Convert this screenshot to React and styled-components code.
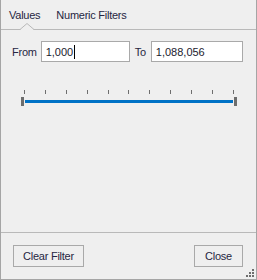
import React from "react";
import styled, { createGlobalStyle } from "styled-components";

const Global = createGlobalStyle`
  html, body { margin: 0; padding: 0; background: #efefef; }
  body { font-family: "Liberation Sans", Arial, sans-serif; }
  * { box-sizing: border-box; }
`;

const Panel = styled.div`
  position: relative;
  width: 257px;
  height: 280px;
  background: #efefef;
  border: 1px solid #a5a5a5;
  border-top: none;
  display: flex;
  flex-direction: column;
  font-size: 11px;
  letter-spacing: -0.25px;
  color: #262642;
`;

const TabBar = styled.div`
  position: relative;
  height: 30px;
  flex: none;
  border-bottom: 1px solid #b9b9b9;
  display: flex;
  align-items: center;
  padding-left: 8px;
  gap: 16px;
`;

const Tab = styled.div`
  color: #262642;
`;

const Notch = styled.svg`
  position: absolute;
  left: 18px;
  bottom: -1px;
  width: 16px;
  height: 8px;
`;

const Body = styled.div`
  flex: 1;
  padding: 11px 12px 0 11px;
`;

const FieldRow = styled.div`
  display: flex;
  align-items: center;
  height: 21px;
`;

const Label = styled.span`
  margin-right: ${(p) => p.$gap}px;
  margin-left: ${(p) => p.$left || 0}px;
`;

const TextBox = styled.div`
  width: ${(p) => p.$w}px;
  height: 21px;
  border: 1px solid #a9a9a9;
  background: #fff;
  color: #1a1a2e;
  padding: 0 0 0 4px;
  display: flex;
  align-items: center;
  letter-spacing: 0;
`;

const Caret = styled.span`
  width: 1px;
  height: 14px;
  background: #000;
  margin-left: 1px;
`;

const Slider = styled.div`
  margin: 28px 0 0 9px;
  width: 216px;
  display: flex;
  flex-direction: column;
  gap: 3px;
`;

const Ticks = styled.div`
  display: flex;
  justify-content: space-between;
  padding: 0 3px;
  height: 4px;
`;

const Tick = styled.div`
  width: 1px;
  height: 4px;
  background: #6e6e6e;
`;

const Track = styled.div`
  display: flex;
  align-items: center;
  gap: 1px;
  height: 9px;
`;

const Thumb = styled.div`
  width: 3px;
  height: 9px;
  background: #6d6d6d;
  flex: none;
`;

const Bar = styled.div`
  flex: 1;
  height: 3px;
  background: #0072c6;
`;

const Footer = styled.div`
  flex: none;
  height: 47px;
  border-top: 1px solid #b9b9b9;
  display: flex;
  justify-content: space-between;
  align-items: flex-start;
  padding: 12px 13px 0 12px;
`;

const Button = styled.button`
  width: ${(p) => p.$w}px;
  height: 22px;
  border: 1px solid #a9a9a9;
  background: #efefef;
  font: inherit;
  font-size: 11px;
  letter-spacing: -0.25px;
  color: #262642;
  padding: 0;
  margin: 0;
`;

const Grip = styled.svg`
  position: absolute;
  right: 1px;
  bottom: 1px;
  width: 9px;
  height: 9px;
`;

export default function App() {
  const ticks = Array.from({ length: 11 });
  return (
    <>
      <Global />
      <Panel>
        <TabBar>
          <Tab>Values</Tab>
          <Tab>Numeric Filters</Tab>
          <Notch viewBox="0 0 16 8">
            <polygon points="1,8 8,1.5 15,8" fill="#efefef" />
            <polyline points="1,7.5 8,1.5 15,7.5" fill="none" stroke="#b9b9b9" strokeWidth="1" />
          </Notch>
        </TabBar>
        <Body>
          <FieldRow>
            <Label $gap={4} $left={0}>From</Label>
            <TextBox $w={89}>
              <span>1,000</span>
              <Caret />
            </TextBox>
            <Label $gap={5} $left={5}>To</Label>
            <TextBox $w={92}>
              <span>1,088,056</span>
            </TextBox>
          </FieldRow>
          <Slider>
            <Ticks>
              {ticks.map((_, i) => (
                <Tick key={i} />
              ))}
            </Ticks>
            <Track>
              <Thumb />
              <Bar />
              <Thumb />
            </Track>
          </Slider>
        </Body>
        <Footer>
          <Button $w={71}>Clear Filter</Button>
          <Button $w={49}>Close</Button>
        </Footer>
        <Grip viewBox="0 0 9 9">
          <rect x="6" y="0" width="2" height="2" fill="#6e6e6e" />
          <rect x="3" y="3" width="2" height="2" fill="#6e6e6e" />
          <rect x="6" y="3" width="2" height="2" fill="#6e6e6e" />
          <rect x="0" y="6" width="2" height="2" fill="#6e6e6e" />
          <rect x="3" y="6" width="2" height="2" fill="#6e6e6e" />
          <rect x="6" y="6" width="2" height="2" fill="#6e6e6e" />
        </Grip>
      </Panel>
    </>
  );
}
